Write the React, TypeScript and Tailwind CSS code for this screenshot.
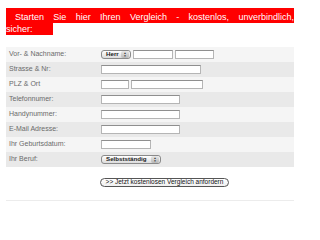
const Input = ({ w }: { w: string }) => (
  <div className={`h-[9px] ${w} border border-[#b5b5b5] border-t-[#8f8f8f] bg-white`} />
);

const Select = ({ text, w }: { text: string; w: string }) => (
  <div
    className={`flex h-[9px] ${w} items-center justify-between rounded-[3px] border border-[#8a8a8a] bg-gradient-to-b from-white to-[#dcdcdc] pl-[4px] pr-[1px]`}
  >
    <span className="text-[6.2px] font-bold leading-none text-[#222]">{text}</span>
    <span className="flex h-[7px] w-[8px] flex-col items-center justify-center rounded-[2px] bg-gradient-to-b from-[#e8e8e8] to-[#b8b8b8] text-[3px] leading-[3px] text-[#333]">
      <span>▲</span>
      <span>▼</span>
    </span>
  </div>
);

const App = () => {
  const form = [
    {
      label: "Vor- & Nachname:",
      field: (
        <div className="flex items-center gap-[2px]">
          <Select text="Herr" w="w-[30px]" />
          <Input w="w-[40px]" />
          <Input w="w-[39px]" />
        </div>
      ),
    },
    { label: "Strasse & Nr:", field: <Input w="w-[100px]" /> },
    {
      label: "PLZ & Ort",
      field: (
        <div className="flex items-center gap-[2px]">
          <Input w="w-[28px]" />
          <Input w="w-[72px]" />
        </div>
      ),
    },
    { label: "Telefonnumer:", field: <Input w="w-[79px]" /> },
    { label: "Handynummer:", field: <Input w="w-[79px]" /> },
    { label: "E-Mail Adresse:", field: <Input w="w-[79px]" /> },
    { label: "Ihr Geburtsdatum:", field: <Input w="w-[50px]" /> },
    { label: "Ihr Beruf:", field: <Select text="Selbstständig" w="w-[60px]" /> },
  ];

  return (
    <div className="h-[201px] w-[300px] overflow-hidden bg-white px-[6px] pt-[8px] font-['Liberation_Sans',Arial,sans-serif]">
      <div className="bg-[#ff0000] pl-[9px] pt-[3px] text-[9px] leading-[12px] text-white [text-align-last:justify] text-justify">
        Starten Sie hier Ihren Vergleich - kostenlos, unverbindlich,
      </div>
      <div className="h-[12px] w-[47px] bg-[#ff0000] text-[9px] leading-[12px] text-white">sicher:</div>

      <div className="mt-[12px]">
        {form.map((row, i) => (
          <div
            key={row.label}
            className={`flex h-[15px] items-center ${i % 2 === 0 ? "bg-[#f5f5f5]" : "bg-[#e9e9e9]"}`}
          >
            <div className="w-[95px] pl-[3px] text-[7px] text-[#6b6b6b]">{row.label}</div>
            {row.field}
          </div>
        ))}
      </div>

      <div className="flex h-[33px] items-start pl-[94px] pt-[11px]">
        <div className="flex h-[9px] w-[129px] items-center justify-center rounded-full border border-[#555] bg-gradient-to-b from-white to-[#f0f0f0] text-[6.5px] leading-none text-[#111]">
          &gt;&gt; Jetzt kostenlosen Vergleich anfordern
        </div>
      </div>
      <div className="h-px bg-[#ececec]" />
    </div>
  );
};

export default App;
